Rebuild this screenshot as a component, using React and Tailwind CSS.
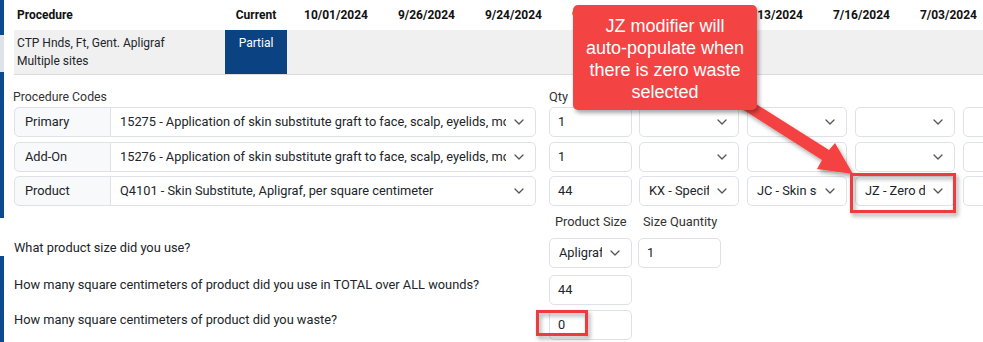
import React from "react";

const DATES = ["10/01/2024", "9/26/2024", "9/24/2024", "9/20/2024", "8/28/2024", "8/13/2024", "7/16/2024", "7/03/2024"];

const Chevron = () => (
  <svg width="10" height="6" viewBox="0 0 10 6" className="shrink-0">
    <path d="M1 1l4 4 4-4" fill="none" stroke="#555" strokeWidth="1.3" strokeLinecap="round" strokeLinejoin="round" />
  </svg>
);

function Select({ value = "", className = "" }) {
  return (
    <div className={`flex items-center h-[30px] shrink-0 bg-white border border-[#dee2e6] pl-[9px] pr-[11px] ${className}`}>
      <span className="flex-1 min-w-0 mr-[8px] overflow-hidden whitespace-nowrap">{value}</span>
      <Chevron />
    </div>
  );
}

function Input({ value = "", className = "" }) {
  return (
    <div className={`flex items-center h-[30px] shrink-0 bg-white border border-[#dee2e6] rounded-[5px] pl-[8px] ${className}`}>
      {value}
    </div>
  );
}

function CodeRow({ label, code, qty, mods }) {
  return (
    <div className="flex h-[30px]">
      <div className="w-[97px] shrink-0 flex items-center bg-[#f8f9fa] border border-[#dee2e6] rounded-l-[5px] pl-[10px]">
        {label}
      </div>
      <Select value={code} className="w-[426px] -ml-px rounded-r-[5px]" />
      <Input value={qty} className="w-[83px] ml-[13px]" />
      <Select value={mods[0]} className="w-[100px] ml-[7px] rounded-[5px]" />
      <Select value={mods[1]} className="w-[100px] ml-[8px] rounded-[5px]" />
      <Select value={mods[2]} className="w-[100px] ml-[8px] rounded-[5px]" />
      <Select value="" className="w-[100px] ml-[8px] rounded-[5px]" />
    </div>
  );
}

export default function App() {
  return (
    <div className="relative w-[983px] h-[342px] overflow-hidden bg-white flex font-['Roboto',sans-serif] text-[12.8px] text-[#212529]">
      <div className="w-[4px] shrink-0 flex flex-col">
        <div className="h-[35px] bg-[#0c4a8e]" />
        <div className="h-[37px] bg-[#dfe3e8]" />
        <div className="h-[146px] bg-[#0c4a8e]" />
        <div className="h-[38px] bg-white" />
        <div className="flex-1 bg-[#0c4a8e]" />
      </div>

      <div className="flex-1 min-w-0">
        {/* table header */}
        <div className="flex h-[30px] items-center pl-[13px] text-[12px] font-bold text-[#111]">
          <div className="w-[208px] shrink-0">Procedure</div>
          <div className="w-[62px] shrink-0 text-center">Current</div>
          {DATES.map((d) => (
            <div key={d} className="w-[87px] shrink-0 text-right pr-[6px]">{d}</div>
          ))}
        </div>
        <div className="flex h-[45px] ml-[10px] bg-[#f0f0f0] border-b border-[#dcdcdc] text-[12px] leading-[18px]">
          <div className="w-[211px] shrink-0 pl-[3px] pt-[4px]">
            <div>CTP Hnds, Ft, Gent. Apligraf</div>
            <div>Multiple sites</div>
          </div>
          <div className="w-[62px] shrink-0 bg-[#0b4382] text-white text-center pt-[4px]">Partial</div>
        </div>

        {/* procedure codes */}
        <div className="flex mt-[14px] ml-[9px] leading-[16px] text-[#333]">
          <div className="w-[536px] shrink-0 text-[12.3px]">Procedure Codes</div>
          <div>Qty</div>
        </div>
        <div className="flex flex-col gap-[4.5px] mt-[2px] ml-[10px]">
          <CodeRow label="Primary" code="15275 - Application of skin substitute graft to face, scalp, eyelids, mouth" qty="1" mods={["", "", ""]} />
          <CodeRow label="Add-On" code="15276 - Application of skin substitute graft to face, scalp, eyelids, mouth" qty="1" mods={["", "", ""]} />
          <CodeRow label="Product" code="Q4101 - Skin Substitute, Apligraf, per square centimeter" qty="44" mods={["KX - Specific", "JC - Skin sub", "JZ - Zero drug"]} />
        </div>

        {/* product questions */}
        <div className="flex mt-[8px] leading-[16px] text-[#333]">
          <div className="w-[551px] shrink-0" />
          <div className="w-[88px] shrink-0">Product Size</div>
          <div>Size Quantity</div>
        </div>
        <div className="flex mt-[8px] ml-[10px]">
          <div className="w-[535px] shrink-0 pt-[1px] leading-[18px]">What product size did you use?</div>
          <Select value="Apligraf" className="w-[83px] rounded-[5px]" />
          <Input value="1" className="w-[83px] ml-[6px]" />
        </div>
        <div className="flex mt-[7px] ml-[10px]">
          <div className="w-[535px] shrink-0 pt-[1px] leading-[18px]">How many square centimeters of product did you use in TOTAL over ALL wounds?</div>
          <Input value="44" className="w-[83px]" />
        </div>
        <div className="flex mt-[5px] ml-[10px]">
          <div className="w-[535px] shrink-0 pt-[1px] leading-[18px]">How many square centimeters of product did you waste?</div>
          <Input value="0" className="w-[83px]" />
        </div>
      </div>

      {/* annotation overlay */}
      <svg className="absolute left-0 top-0 pointer-events-none" width="983" height="342" viewBox="0 0 983 342">
        <defs>
          <filter id="sh" x="-20%" y="-20%" width="140%" height="140%">
            <feDropShadow dx="2" dy="3" stdDeviation="2" floodColor="#000" floodOpacity="0.35" />
          </filter>
        </defs>
        <g filter="url(#sh)">
          <polygon points="739,107 745,97 829,150 835,143 853,174 817,169 822,160" fill="#f44343" />
          <rect x="851.5" y="174.5" width="103" height="37" fill="none" stroke="#ee3a3f" strokeWidth="3" />
          <rect x="537.5" y="311.5" width="49" height="23" fill="none" stroke="#ee3a3f" strokeWidth="3" />
        </g>
      </svg>
      <div className="absolute left-[573px] top-[5px] w-[184px] h-[105px] rounded-[5px] bg-[#f44343] text-white text-center font-['Liberation_Sans',Arial,sans-serif] text-[18px] leading-[22px] pt-[10px] shadow-[2px_3px_4px_rgba(0,0,0,0.35)]">
        JZ modifier will<br />
        auto-populate when<br />
        there is zero waste<br />
        selected
      </div>
    </div>
  );
}
